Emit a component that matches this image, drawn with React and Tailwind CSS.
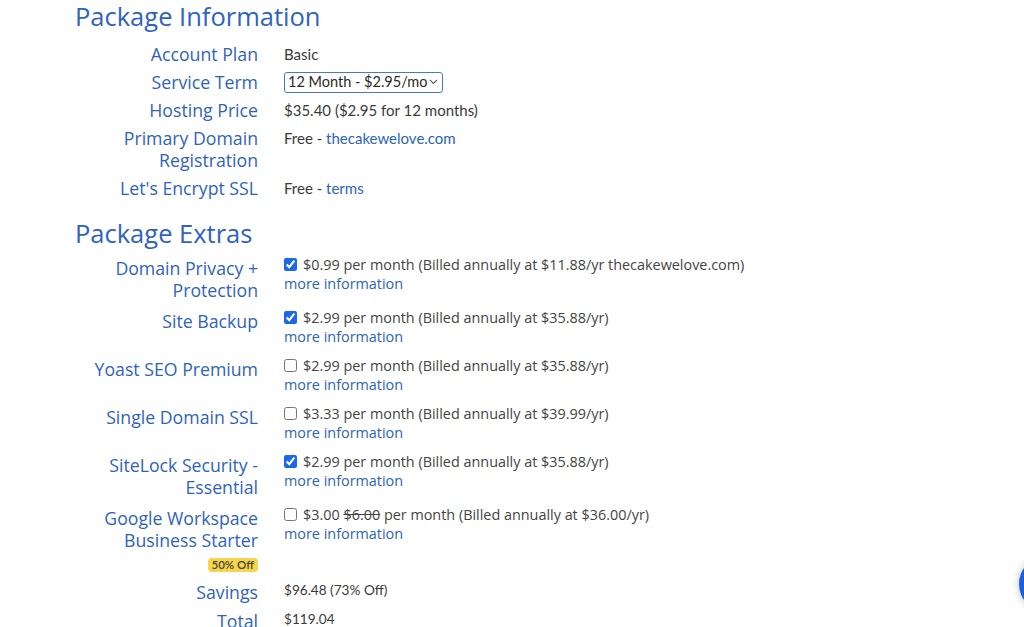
import React from "react";

const labelCls =
  "text-right text-[17.7px] leading-[22px] text-[#2f63bd] font-['Open_Sans',sans-serif]";
const valCls = "text-[15px] leading-[22px] text-[#3a3a3a] font-['Lato',sans-serif]";
const sumCls = "text-[13.6px] leading-[22px] text-[#3a3a3a] font-['Lato',sans-serif] -mt-[2px]";
const linkCls = "text-[#2d63b8]";

function Extra({ label, checked, children, badge }) {
  return (
    <>
      <div className={labelCls + " pt-[2px] pb-[7px]"}>
        {label.map((l, i) => (
          <div key={i}>{l}</div>
        ))}
        {badge}
      </div>
      <div className="pb-[10px] font-['Open_Sans',sans-serif] text-[14.4px] leading-[19px]">
        <div className="flex items-center text-[#444] whitespace-nowrap">
          <input
            type="checkbox"
            defaultChecked={checked}
            className="w-[13px] h-[13px] m-0 mr-[6px] accent-[#1a6ae6]"
          />
          <span>{children}</span>
        </div>
        <div className={linkCls}>more information</div>
      </div>
    </>
  );
}

export default function App() {
  return (
    <div className="relative w-[1024px] h-[627px] overflow-hidden bg-white">
      <div className="pl-[75px]">
        <h1 className="text-[25.5px] leading-[32px] text-[#2f63bd] font-['Open_Sans',sans-serif]">
          Package Information
        </h1>
      </div>
      <div className="grid grid-cols-[258px_1fr] gap-x-[26px] gap-y-[6px] mt-[11px]">
        <div className={labelCls}>Account Plan</div>
        <div className={valCls}>Basic</div>
        <div className={labelCls}>Service Term</div>
        <div className="flex items-center">
          <div className="h-[21px] w-[159px] border border-[#4a78c8] rounded-[3px] flex items-center justify-between pl-[3px] pr-[4px] text-[14.5px] text-[#2a2a2a] font-['Lato',sans-serif] whitespace-nowrap">
            <span>12 Month - $2.95/mo</span>
            <svg width="9" height="6" viewBox="0 0 9 6">
              <path d="M1 1l3.5 3.5L8 1" fill="none" stroke="#666" strokeWidth="1.2" />
            </svg>
          </div>
        </div>
        <div className={labelCls}>Hosting Price</div>
        <div className={valCls}>$35.40 ($2.95 for 12 months)</div>
        <div className={labelCls}>
          <div>Primary Domain</div>
          <div>Registration</div>
        </div>
        <div className={valCls}>
          Free - <span className={linkCls}>thecakewelove.com</span>
        </div>
        <div className={labelCls}>Let's Encrypt SSL</div>
        <div className={valCls}>
          Free - <span className={linkCls}>terms</span>
        </div>
      </div>
      <div className="pl-[75px] mt-[18px]">
        <h2 className="text-[25.5px] leading-[32px] text-[#2f63bd] font-['Open_Sans',sans-serif]">
          Package Extras
        </h2>
      </div>
      <div className="grid grid-cols-[258px_1fr] gap-x-[26px] mt-[6px]">
        <Extra label={["Domain Privacy +", "Protection"]} checked>
          $0.99 per month (Billed annually at $11.88/yr thecakewelove.com)
        </Extra>
        <Extra label={["Site Backup"]} checked>
          $2.99 per month (Billed annually at $35.88/yr)
        </Extra>
        <Extra label={["Yoast SEO Premium"]}>
          $2.99 per month (Billed annually at $35.88/yr)
        </Extra>
        <Extra label={["Single Domain SSL"]}>
          $3.33 per month (Billed annually at $39.99/yr)
        </Extra>
        <Extra label={["SiteLock Security -", "Essential"]} checked>
          $2.99 per month (Billed annually at $35.88/yr)
        </Extra>
        <Extra
          label={["Google Workspace", "Business Starter"]}
          badge={
            <div className="flex justify-end mt-[7px]">
              <span className="bg-[#f7d54a] rounded-[4px] px-[4px] text-[11.5px] leading-[14px] text-[#444] font-['Lato',sans-serif] font-semibold">
                50% Off
              </span>
            </div>
          }
        >
          $3.00 <span className="line-through">$6.00</span> per month (Billed annually at $36.00/yr)
        </Extra>
      </div>
      <div className="grid grid-cols-[258px_1fr] gap-x-[26px] gap-y-[7px] mt-[2px]">
        <div className={labelCls}>Savings</div>
        <div className={sumCls}>$96.48 (73% Off)</div>
        <div className={labelCls}>Total</div>
        <div className={sumCls}>$119.04</div>
      </div>
      <div className="absolute left-[1019px] top-[556px] w-[56px] h-[56px] rounded-full bg-[#1b5fe0] shadow-[0_0_8px_rgba(0,0,0,0.25)]" />
    </div>
  );
}
